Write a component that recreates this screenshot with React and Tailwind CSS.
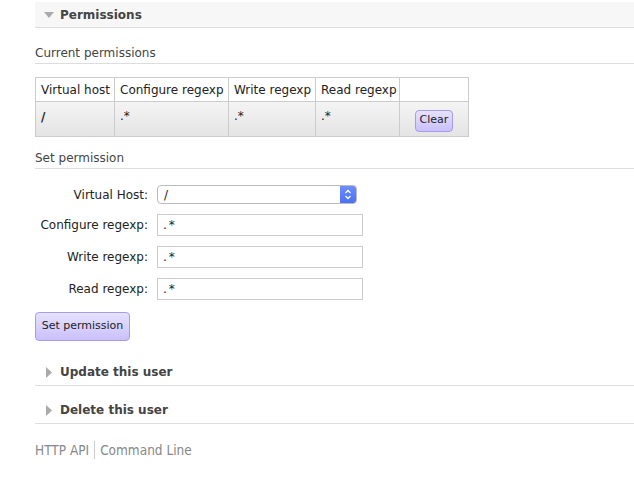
import React from 'react';

const font = { fontFamily: '"DejaVu Sans", Verdana, sans-serif' };

function Section({ title, open, children }) {
  return (
    <div>
      <div
        className={`flex border-b border-[#ddd] ${open ? 'bg-[#f7f7f7] h-[26px] items-center' : 'h-[38px] items-end pb-[5px]'}`}
      >
        <span className="w-[25px] h-[16px] flex items-center justify-center pl-[2px]">
          {open ? (
            <svg width="10" height="6" viewBox="0 0 10 6">
              <path d="M0 0 L10 0 L5 6 Z" fill="#aaa" />
            </svg>
          ) : (
            <svg width="6" height="11" viewBox="0 0 6 11">
              <path d="M0 0 L6 5.5 L0 11 Z" fill="#aaa" />
            </svg>
          )}
        </span>
        <span className="text-[12px] leading-[16px] font-bold text-[#444]">{title}</span>
      </div>
      {children}
    </div>
  );
}

function SubHeading({ children }) {
  return (
    <h3 className="text-[12px] leading-[16px] text-[#444] pb-[2px] border-b border-[#ddd]">{children}</h3>
  );
}

function PurpleButton({ children, className }) {
  return (
    <button
      className={`rounded-[4px] border border-[#a79bea] bg-gradient-to-b from-[#e6e2ff] to-[#c9c0fb] text-[#222] text-[11px] ${className}`}
    >
      {children}
    </button>
  );
}

function FormRow({ label, children }) {
  return (
    <div className="flex items-center">
      <label className="w-[113px] text-right text-[12px] text-[#222]">{label}</label>
      <div className="ml-[9px] flex">{children}</div>
    </div>
  );
}

function TextInput({ value }) {
  return (
    <input
      readOnly
      value={value}
      className="block w-[206px] h-[22px] border border-[#ccc] px-[5px] text-[12px] tracking-[2px] text-[#222] outline-none"
      style={font}
    />
  );
}

export default function App() {
  const perms = [{ vhost: '/', configure: '.*', write: '.*', read: '.*' }];

  return (
    <div className="bg-white min-h-[499px] pl-[35px] pt-[2px] text-[#333]" style={font}>
      <Section title="Permissions" open>
        <div className="pt-[17px]">
          <SubHeading>Current permissions</SubHeading>
          <table className="mt-[13px] w-[433px] table-fixed border-collapse text-[12px] text-[#222] whitespace-nowrap">
            <thead>
              <tr className="h-[24px]">
                <th className="w-[79px] border border-[#ccc] px-[5px] font-normal text-left">Virtual host</th>
                <th className="w-[114px] border border-[#ccc] px-[5px] font-normal text-left">Configure regexp</th>
                <th className="w-[87px] border border-[#ccc] px-[5px] font-normal text-left">Write regexp</th>
                <th className="w-[84px] border border-[#ccc] px-[5px] font-normal text-left">Read regexp</th>
                <th className="w-[69px] border border-[#ccc]"></th>
              </tr>
            </thead>
            <tbody>
              {perms.map((p) => (
                <tr key={p.vhost} className="h-[35px] bg-gradient-to-b from-[#f4f4f4] to-[#e4e4e4]">
                  <td className="border border-[#ccc] px-[5px] font-bold align-middle pb-[4px]">{p.vhost}</td>
                  <td className="border border-[#ccc] px-[5px] align-middle pb-[6px]">{p.configure}</td>
                  <td className="border border-[#ccc] px-[5px] align-middle pb-[6px]">{p.write}</td>
                  <td className="border border-[#ccc] px-[5px] align-middle pb-[6px]">{p.read}</td>
                  <td className="border border-[#ccc] text-center align-middle pt-[3px]">
                    <PurpleButton className="w-[38px] h-[22px]">Clear</PurpleButton>
                  </td>
                </tr>
              ))}
            </tbody>
          </table>

          <div className="mt-[13px]">
            <SubHeading>Set permission</SubHeading>
          </div>

          <div className="mt-[16px] flex flex-col gap-[10px]">
            <FormRow label="Virtual Host:">
              <div className="relative w-[200px] h-[19px] border border-[#bbb] rounded-[4px] bg-white flex items-center overflow-hidden">
                <span className="pl-[6px] text-[12px] text-[#222]">/</span>
                <span className="absolute right-0 top-0 bottom-0 w-[16px] bg-gradient-to-b from-[#6d8dfb] to-[#4d6ff5] flex items-center justify-center">
                  <svg width="8" height="11" viewBox="0 0 8 11">
                    <path d="M1.5 4 L4 1.5 L6.5 4 M1.5 7 L4 9.5 L6.5 7" fill="none" stroke="white" strokeWidth="1.3" />
                  </svg>
                </span>
              </div>
            </FormRow>
            <FormRow label="Configure regexp:">
              <TextInput value=".*" />
            </FormRow>
            <FormRow label="Write regexp:">
              <TextInput value=".*" />
            </FormRow>
            <FormRow label="Read regexp:">
              <TextInput value=".*" />
            </FormRow>
          </div>

          <PurpleButton className="block mt-[12px] w-[95px] h-[29px]">Set permission</PurpleButton>
        </div>
      </Section>

      <div className="mt-[7px]">
        <Section title="Update this user" />
        <Section title="Delete this user" />
      </div>

      <div className="mt-[16px] flex items-center text-[13.5px] text-[#888]" style={{ fontFamily: '"DejaVu Sans Condensed", "DejaVu Sans", sans-serif' }}>
        <span className="pr-[5px]">HTTP API</span>
        <span className="border-l border-[#ccc] h-[18px]"></span>
        <span className="pl-[5px]">Command Line</span>
      </div>
    </div>
  );
}
